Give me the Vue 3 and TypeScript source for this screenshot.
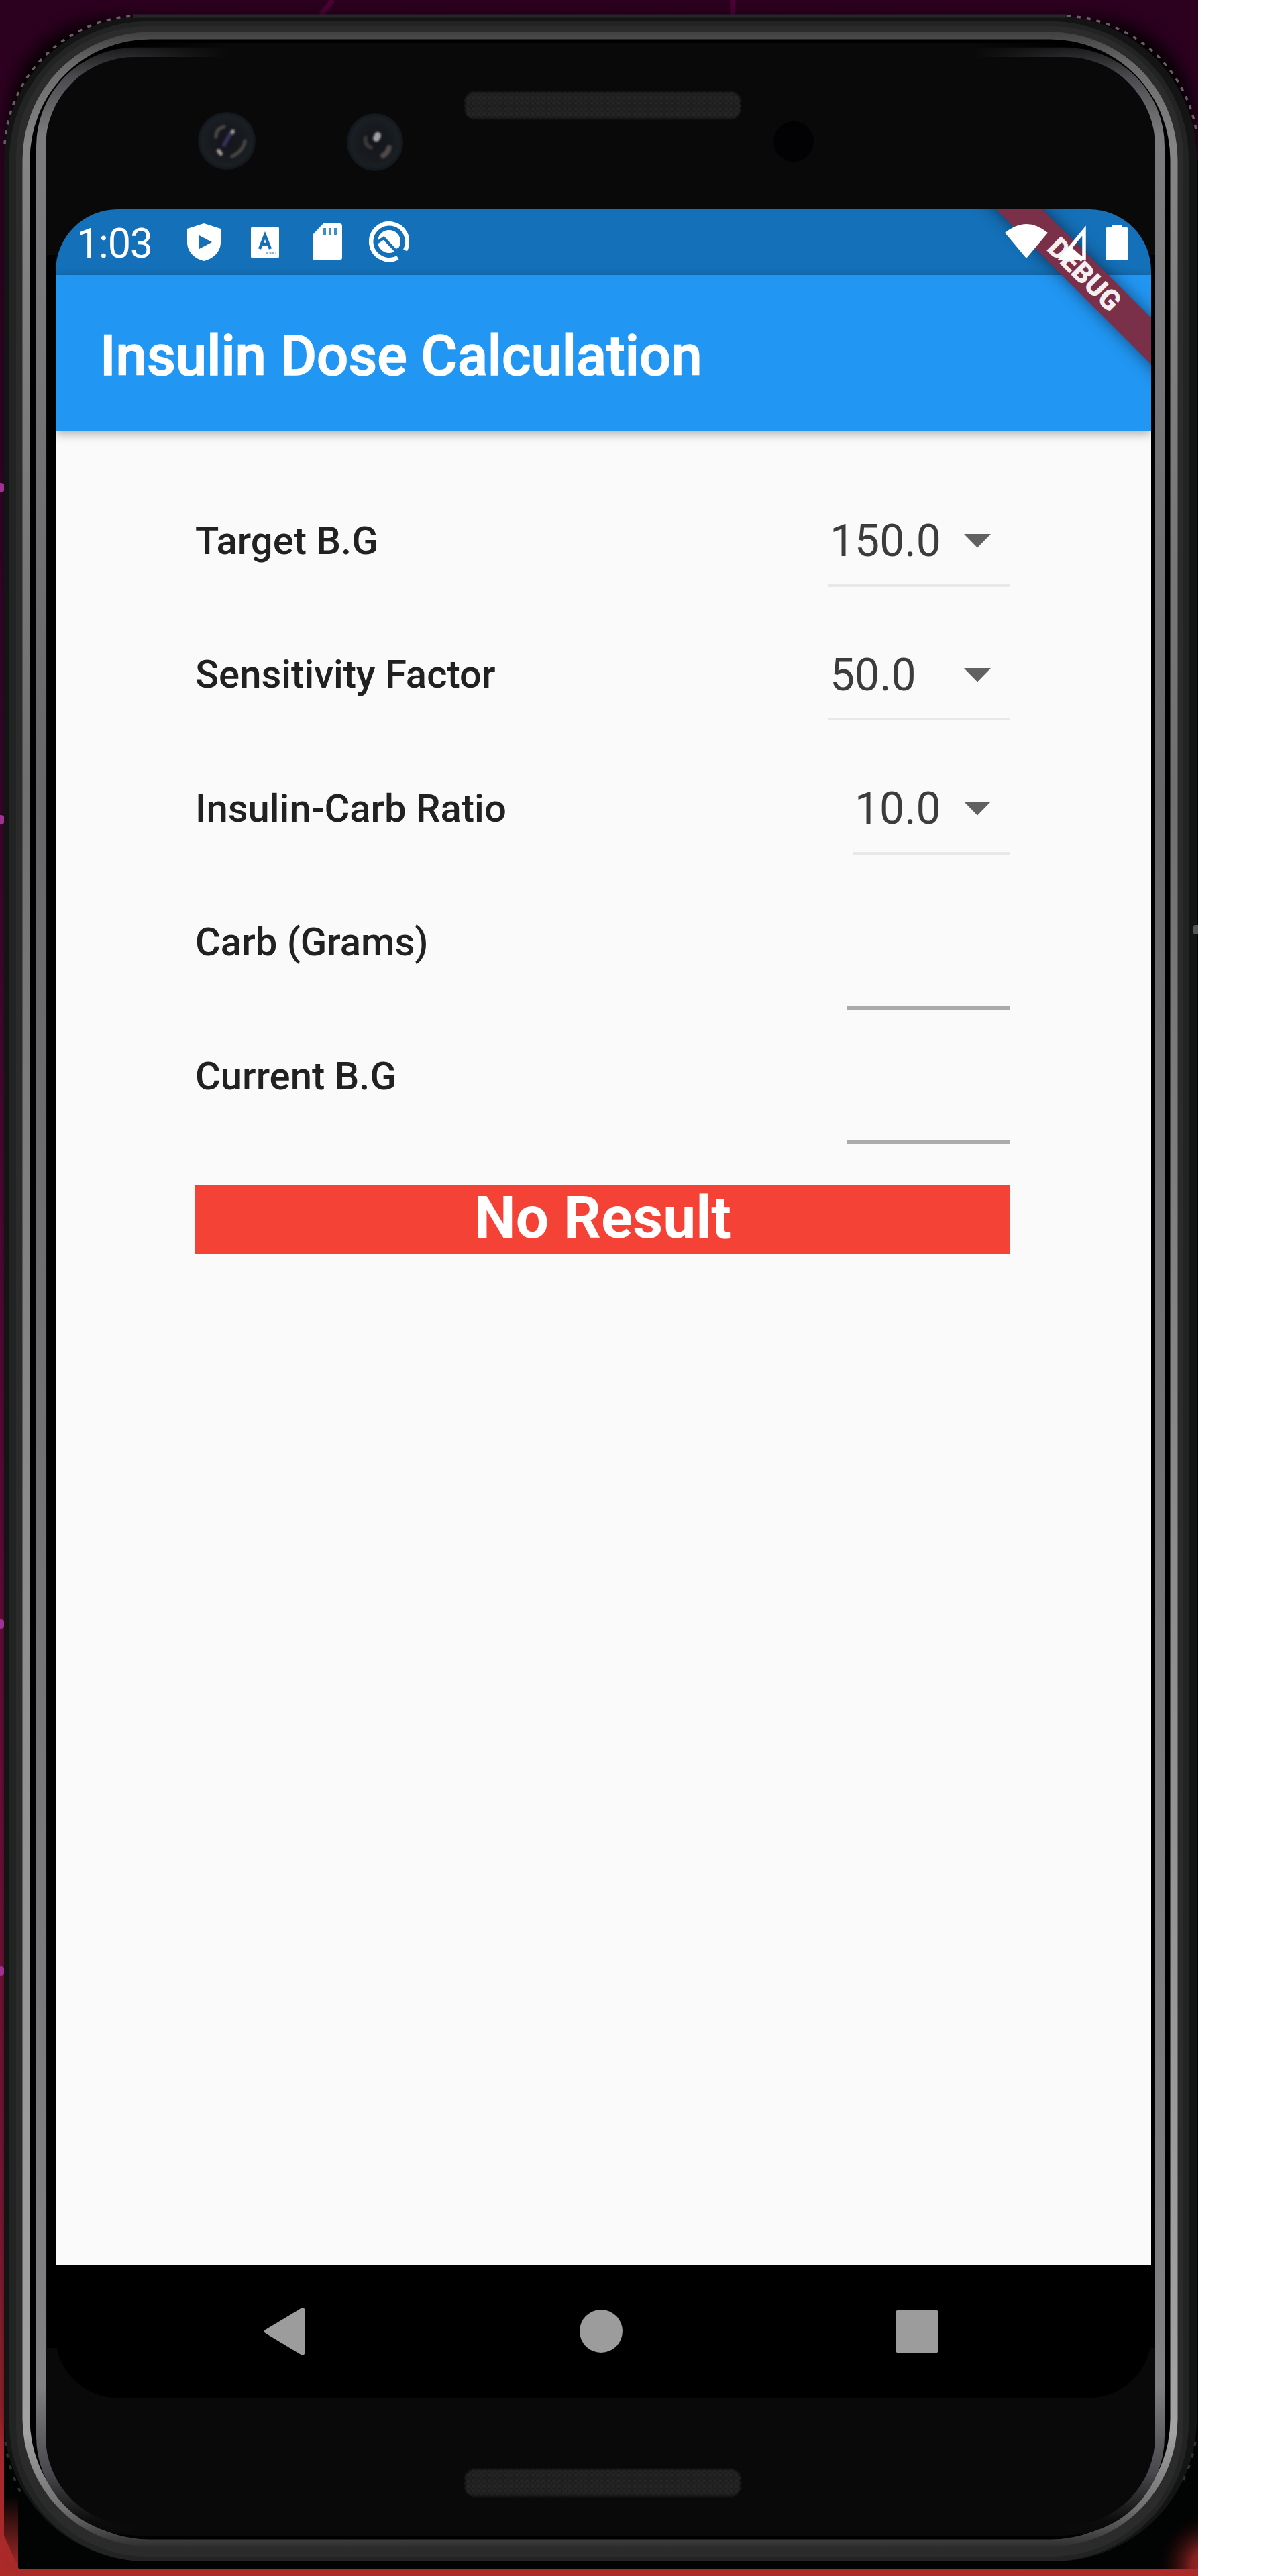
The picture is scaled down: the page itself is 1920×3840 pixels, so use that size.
<script setup lang="ts">
interface Picker {
  label: string
  value: string
  width: number
}

const pickers: Picker[] = [
  { label: 'Target B.G', value: '150.0', width: 272 },
  { label: 'Sensitivity Factor', value: '50.0', width: 272 },
  { label: 'Insulin-Carb Ratio', value: '10.0', width: 235 },
]
const inputs: string[] = ['Carb (Grams)', 'Current B.G']
const sparks: number[] = [727, 1222, 2421, 2938]
</script>

<template>
  <div class="page">
    <div class="device">
      <svg class="shell" width="1786" height="3840" viewBox="0 0 1786 3840" aria-hidden="true">
        <defs>
          <linearGradient id="wall" x1="0" y1="0" x2="0" y2="3840" gradientUnits="userSpaceOnUse">
            <stop offset="0" stop-color="#2c001f" />
            <stop offset="0.3" stop-color="#3d0630" />
            <stop offset="0.6" stop-color="#6c0a40" />
            <stop offset="0.86" stop-color="#8c1a3c" />
            <stop offset="0.92" stop-color="#a02430" />
            <stop offset="1" stop-color="#ac2a28" />
          </linearGradient>
          <linearGradient id="rim" x1="0" y1="50" x2="0" y2="3796" gradientUnits="userSpaceOnUse">
            <stop offset="0" stop-color="#424242" />
            <stop offset="0.012" stop-color="#6a6a6a" />
            <stop offset="0.045" stop-color="#858585" />
            <stop offset="0.3" stop-color="#707070" />
            <stop offset="0.6" stop-color="#8c8c8c" />
            <stop offset="0.955" stop-color="#a2a2a2" />
            <stop offset="0.985" stop-color="#707070" />
            <stop offset="1" stop-color="#303030" />
          </linearGradient>
          <linearGradient id="lip" x1="0" y1="72" x2="0" y2="3780" gradientUnits="userSpaceOnUse">
            <stop offset="0" stop-color="#1c1c1e" />
            <stop offset="0.012" stop-color="#4c4c50" />
            <stop offset="0.035" stop-color="#7c7c7e" />
            <stop offset="0.3" stop-color="#666668" />
            <stop offset="0.94" stop-color="#808082" />
            <stop offset="0.975" stop-color="#48484c" />
            <stop offset="0.994" stop-color="#0c0c0c" />
            <stop offset="1" stop-color="#090909" />
          </linearGradient>
          <linearGradient id="veil" x1="200" y1="0" x2="1590" y2="0" gradientUnits="userSpaceOnUse">
            <stop offset="0" stop-color="#090909" stop-opacity="0" />
            <stop offset="0.1" stop-color="#090909" />
            <stop offset="0.9" stop-color="#090909" />
            <stop offset="1" stop-color="#090909" stop-opacity="0" />
          </linearGradient>
          <linearGradient id="glowLeft" x1="0" y1="3720" x2="0" y2="3830" gradientUnits="userSpaceOnUse">
            <stop offset="0" stop-color="#a82a28" stop-opacity="0" />
            <stop offset="1" stop-color="#a82a28" />
          </linearGradient>
          <radialGradient id="glowRight" cx="1806" cy="3826" r="85" gradientUnits="userSpaceOnUse">
            <stop offset="0" stop-color="#b02a28" />
            <stop offset="0.35" stop-color="#842020" />
            <stop offset="1" stop-color="#000000" stop-opacity="0" />
          </radialGradient>
          <radialGradient id="lens">
            <stop offset="0" stop-color="#15151d" />
            <stop offset="0.5" stop-color="#16191d" />
            <stop offset="0.85" stop-color="#1a1f24" />
            <stop offset="1" stop-color="#12161a" />
          </radialGradient>
          <pattern id="mesh" width="8" height="8" patternUnits="userSpaceOnUse">
            <rect width="8" height="8" fill="#181818" />
            <rect width="4" height="4" fill="#2c2c2c" />
            <rect x="4" y="4" width="4" height="4" fill="#282828" />
          </pattern>
          <filter id="soft" x="-10%" y="-10%" width="120%" height="120%">
            <feGaussianBlur stdDeviation="14" />
          </filter>
          <filter id="fine" x="-20%" y="-20%" width="140%" height="140%">
            <feGaussianBlur stdDeviation="1.500" />
          </filter>
        </defs>

        <rect width="1786" height="3840" fill="url(#wall)" />
        <path d="M478 22 496 0M1092 0V22" stroke="#50003a" stroke-width="7" />
        <rect x="14" y="30" width="1764" height="3700" rx="150" fill="#000" filter="url(#soft)" />
        <circle v-for="y in sparks" :key="y" cx="1" :cy="y" r="7" fill="#a03092" />
        <path d="M6 240H1786V3829H28L6 3780Z" fill="#020303" />
        <rect x="6" y="3720" width="21" height="110" fill="url(#glowLeft)" />
        <rect x="1690" y="3735" width="96" height="94" fill="url(#glowRight)" />

        <rect x="6" y="24" width="1778" height="3794" rx="212" fill="#141414" />
        <path d="M198 24H1590" stroke="#24262a" stroke-width="5" />
        <g fill="none" stroke="#666062" stroke-width="3.500">
          <path d="M7 215A205 205 0 0 1 198 24" stroke-dasharray="6 9" />
          <path d="M1590 24A205 205 0 0 1 1784 200" stroke-dasharray="6 9" />
          <path d="M8 3640A215 215 0 0 0 36 3725M1782 3640A215 215 0 0 1 1760 3705" stroke="#303030" stroke-dasharray="6 12" />
        </g>
        <rect x="14" y="32" width="1758" height="3786" rx="205" fill="#222323" />
        <rect x="24" y="39" width="1740" height="3772" rx="196" fill="#2b2b2b" />
        <rect x="39" y="53" width="1711" height="3738" rx="185" fill="#000" stroke="url(#rim)" stroke-width="11" />
        <rect x="56" y="70" width="1676" height="3710" rx="148" fill="#090909" />
        <rect x="61" y="78" width="1668" height="3694" rx="140" fill="#090909" stroke="url(#lip)" stroke-width="14" />
        <rect x="200" y="64" width="1390" height="28" fill="url(#veil)" />
        <rect x="200" y="3762" width="1390" height="18" fill="#090909" />
        <path d="M77 380V3500" stroke="#000" stroke-width="14" />
        <path d="M1718 380V3500" stroke="#000" stroke-width="7" />
        <rect x="1779" y="1379" width="9" height="14" rx="3" fill="#555" />

        <g fill="url(#mesh)" filter="url(#fine)">
          <rect x="693" y="137" width="411" height="40" rx="14" />
          <rect x="693" y="3681" width="411" height="40" rx="14" />
        </g>
        <ellipse cx="338" cy="210" rx="43" ry="43" fill="url(#lens)" />
        <ellipse cx="559" cy="212" rx="42" ry="43" fill="url(#lens)" />
        <circle cx="1183" cy="211" r="30" fill="#020104" />
        <g filter="url(#fine)" fill="none" stroke-linecap="round">
          <path d="M322 204Q322 192 334 189M346 233Q362 226 365 210" stroke="#4a4644" stroke-width="5" />
          <path d="M343 200 334 216" stroke="#30305a" stroke-width="6" />
          <path d="M347 196V197M326 225 329 229" stroke="#a09896" stroke-width="6" />
          <path d="M563 202 561 206" stroke="#a0a0a0" stroke-width="10" />
          <path d="M571 232Q578 228 580 220" stroke="#504a46" stroke-width="8" />
          <path d="M545 205Q543 216 553 220" stroke="#383836" stroke-width="6" />
        </g>
      </svg>

      <main class="screen">
        <header class="status">
          <div class="status-left">
            <span class="clock">1:03</span>
            <svg class="i-shield" width="50" height="56" viewBox="0 0 50 56">
              <path fill="#fff" fill-rule="evenodd" d="M25 0 50 8V28C50 43 38 53 25 56 12 53 0 43 0 28V8ZM18 18V38L37 28Z" />
            </svg>
            <svg class="i-letter" width="42" height="47" viewBox="0 0 42 47">
              <rect width="42" height="47" rx="3" fill="#fff" />
              <path d="M13 33 21 13 29 33M16 26H26" fill="none" stroke="#1470b8" stroke-width="4.500" />
              <path d="M23 39.500H37" stroke="#1470b8" stroke-width="3" stroke-dasharray="3 1.500" opacity=".5" />
            </svg>
            <svg class="i-card" width="44" height="55" viewBox="0 0 44 55">
              <path d="M16 0H40Q44 0 44 4V51Q44 55 40 55H4Q0 55 0 51V17Z" fill="#fff" />
              <path d="M18 7V18M26 7V18M34 7V18" stroke="#1470b8" stroke-width="4" opacity=".8" />
            </svg>
            <svg class="i-ring" width="60" height="60" viewBox="0 0 60 60">
              <path d="M43 54A27 27 0 1 1 54 43" fill="none" stroke="#fff" stroke-width="6.500" />
              <circle cx="30" cy="30" r="17" fill="#fff" />
              <path d="M13 31 22 25 46 50" fill="none" stroke="#1470b8" stroke-width="4.500" />
              <path d="M40 42 46 48" stroke="#1470b8" stroke-width="8" />
            </svg>
          </div>
          <div class="status-right">
            <svg width="64" height="51" viewBox="0 0 64 51">
              <path d="M0 13Q32 -13 64 13L32 51Z" fill="#fff" />
            </svg>
            <svg class="i-cell" width="43" height="52" viewBox="0 0 43 52">
              <path d="M40 8V49H6Z" fill="none" stroke="#fff" stroke-width="5.500" />
              <path d="M19 31 40 49H4Z" fill="#fff" />
            </svg>
            <svg class="i-battery" width="34" height="53" viewBox="0 0 34 53">
              <path d="M10 0H24V4H31Q34 4 34 7V50Q34 53 31 53H3Q0 53 0 50V7Q0 4 3 4H10Z" fill="#fff" />
            </svg>
          </div>
        </header>
        <div class="appbar"><h1>Insulin Dose Calculation</h1></div>
        <div class="banner">DEBUG</div>

        <section class="body">
          <div v-for="p in pickers" :key="p.label" class="row">
            <span class="label">{{ p.label }}</span>
            <div class="picker" :style="{ width: p.width + 'px' }">
              <span>{{ p.value }}</span>
              <svg width="40" height="21" viewBox="0 0 40 21"><path d="M0 0H40L20 20.500Z" fill="#616161" /></svg>
            </div>
          </div>
          <div v-for="name in inputs" :key="name" class="row">
            <span class="label">{{ name }}</span>
            <div class="field"></div>
          </div>
          <div class="result">No Result</div>
        </section>

        <nav class="nav">
          <svg width="62" height="71" viewBox="0 0 62 71"><path d="M57 3 3 35.500 57 68Z" fill="#9c9c9c" stroke="#9c9c9c" stroke-width="6" stroke-linejoin="round" /></svg>
          <svg width="64" height="64" viewBox="0 0 64 64"><circle cx="32" cy="32" r="32" fill="#9c9c9c" /></svg>
          <svg width="64" height="65" viewBox="0 0 64 65"><rect width="64" height="65" rx="5" fill="#9c9c9c" /></svg>
        </nav>
      </main>
    </div>
  </div>
</template>

<style>
body {
  background: #fff;
}
</style>

<style scoped>
.page {
  width: 1920px;
  height: 3840px;
  overflow: hidden;
  background: #fff;
  font-family: Roboto, "Liberation Sans", sans-serif;
}
.device {
  position: relative;
  box-sizing: border-box;
  width: 1786px;
  height: 3840px;
  padding: 312px 70px 266px 83px;
}
.shell {
  position: absolute;
  inset: 0;
}
.screen {
  position: relative;
  display: flex;
  flex-direction: column;
  width: 1633px;
  height: 3262px;
  overflow: hidden;
  border-radius: 92px;
  background: #000;
}
.status {
  display: flex;
  justify-content: space-between;
  flex: none;
  height: 98px;
  background: #1470b8;
}
.status-left,
.status-right {
  position: relative;
  z-index: 3;
  display: flex;
  align-items: flex-start;
}
.status-left {
  padding-left: 31px;
}
.status-right {
  padding: 22px 34px 0 0;
}
.status svg {
  flex: none;
}
.clock {
  width: 165px;
  margin-top: 15px;
  color: #fff;
  font-size: 61px;
  letter-spacing: -1.2px;
  line-height: 72px;
}
.i-shield { margin-top: 21px; }
.i-letter { margin: 26px 0 0 45px; }
.i-card { margin: 21px 0 0 50px; }
.i-ring { margin: 18px 0 0 40px; }
.i-cell { margin: 2px 0 0 14px; }
.i-battery { margin: 1px 0 0 29px; }
.appbar {
  position: relative;
  z-index: 1;
  display: flex;
  align-items: center;
  flex: none;
  height: 233px;
  padding-left: 66px;
  background: #2196f3;
  box-shadow: 0 4px 14px rgba(0, 0, 0, 0.3);
}
.appbar h1 {
  margin: 8px 0 0;
  color: #fff;
  font-size: 83.3px;
  font-weight: 500;
  line-height: 100px;
  white-space: nowrap;
  -webkit-text-stroke: 1.5px #fff;
}
.banner {
  position: absolute;
  z-index: 2;
  top: 71px;
  left: 1282px;
  width: 500px;
  height: 49px;
  box-sizing: border-box;
  padding-left: 4px;
  color: #f4efef;
  background: #7b3049;
  box-shadow: 0 0 25px rgba(0, 0, 0, 0.5);
  font-size: 42px;
  font-weight: 900;
  line-height: 50px;
  text-align: center;
  transform: rotate(45deg);
}
.body {
  flex: none;
  box-sizing: border-box;
  height: 2733px;
  padding: 64px 210px 0 208px;
  background: #fafafa;
}
.row {
  display: flex;
  align-items: center;
  justify-content: space-between;
  height: 199.5px;
}
.label {
  margin-top: -2px;
  color: #212121;
  font-size: 58px;
  font-weight: 500;
  white-space: nowrap;
}
.picker {
  display: flex;
  align-items: center;
  justify-content: space-between;
  box-sizing: border-box;
  height: 136px;
  padding: 4px 29px 0 3px;
  border-bottom: 4px solid #e8e8e8;
  color: #3c3c3c;
  font-size: 66px;
}
.field {
  align-self: flex-end;
  width: 244px;
  height: 120px;
  border-bottom: 5px solid #ababab;
}
.result {
  height: 103px;
  margin-top: 61px;
  color: #fff;
  background: #f44336;
  font-size: 87.5px;
  font-weight: 700;
  line-height: 98px;
  text-align: center;
}
.nav {
  display: flex;
  align-items: center;
  justify-content: space-between;
  flex: 1;
  padding: 0 317px 0 311px;
  background: #000;
}
</style>
